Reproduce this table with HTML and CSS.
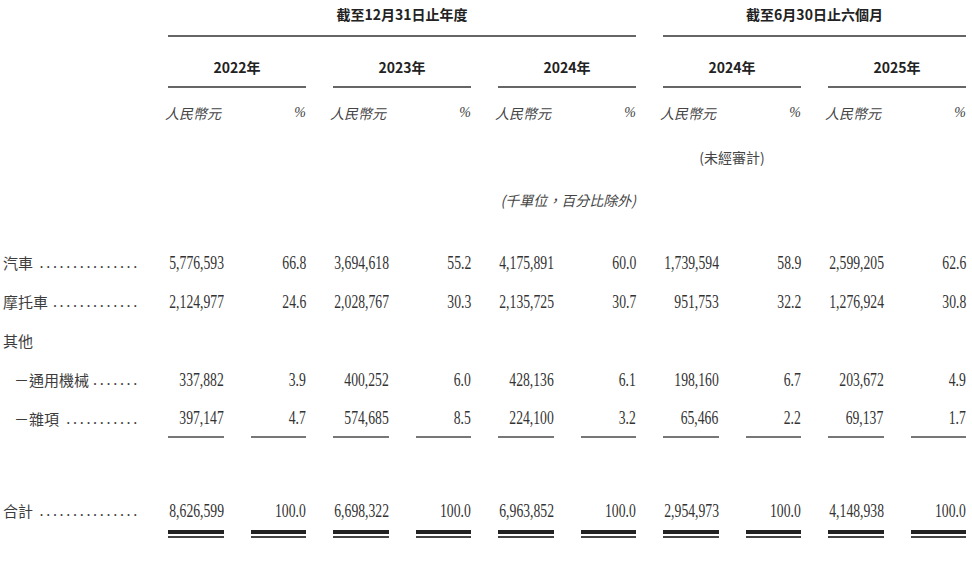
FILE: index.html
```html
<!DOCTYPE html>
<html lang="zh-Hant">
<head>
    <meta charset="UTF-8">
    <meta name="viewport" content="width=device-width, initial-scale=1.0">
    <title>按產品類別劃分的收入</title>
    <link rel="stylesheet" href="styles.css">
</head>
<body>

    <div class="sheet">
        <div class="row head">
            <div></div>
            <div class="period year-span">截至12月31日止年度</div>
            <div class="period half-span">截至6月30日止六個月</div>
        </div>

        <div class="row years">
            <div></div>
            <div class="year">2022年</div>
            <div class="year">2023年</div>
            <div class="year">2024年</div>
            <div class="year">2024年</div>
            <div class="year">2025年</div>
        </div>

        <div class="row units">
            <div></div>
            <div class="unit">人民幣元</div><div class="unit pct">%</div>
            <div class="unit">人民幣元</div><div class="unit pct">%</div>
            <div class="unit">人民幣元</div><div class="unit pct">%</div>
            <div class="unit">人民幣元</div><div class="unit pct">%</div>
            <div class="unit">人民幣元</div><div class="unit pct">%</div>
        </div>

        <div class="row audit">
            <div class="audit-note">(未經審計)</div>
        </div>

        <div class="row basis">
            <div class="basis-note">(千單位，百分比除外)</div>
        </div>

        <div class="row data first">
            <div class="label"><span class="name">汽車</span><span class="dots">...............</span></div>
            <div class="num"><span>5,776,593</span></div><div class="num"><span>66.8</span></div>
            <div class="num"><span>3,694,618</span></div><div class="num"><span>55.2</span></div>
            <div class="num"><span>4,175,891</span></div><div class="num"><span>60.0</span></div>
            <div class="num"><span>1,739,594</span></div><div class="num"><span>58.9</span></div>
            <div class="num"><span>2,599,205</span></div><div class="num"><span>62.6</span></div>
        </div>

        <div class="row data">
            <div class="label"><span class="name">摩托車</span><span class="dots">.............</span></div>
            <div class="num"><span>2,124,977</span></div><div class="num"><span>24.6</span></div>
            <div class="num"><span>2,028,767</span></div><div class="num"><span>30.3</span></div>
            <div class="num"><span>2,135,725</span></div><div class="num"><span>30.7</span></div>
            <div class="num"><span>951,753</span></div><div class="num"><span>32.2</span></div>
            <div class="num"><span>1,276,924</span></div><div class="num"><span>30.8</span></div>
        </div>

        <div class="row data">
            <div class="label"><span class="name">其他</span></div>
        </div>

        <div class="row data">
            <div class="label sub"><span class="name">－通用機械</span><span class="dots">.......</span></div>
            <div class="num"><span>337,882</span></div><div class="num"><span>3.9</span></div>
            <div class="num"><span>400,252</span></div><div class="num"><span>6.0</span></div>
            <div class="num"><span>428,136</span></div><div class="num"><span>6.1</span></div>
            <div class="num"><span>198,160</span></div><div class="num"><span>6.7</span></div>
            <div class="num"><span>203,672</span></div><div class="num"><span>4.9</span></div>
        </div>

        <div class="row data ruled">
            <div class="label sub"><span class="name">－雜項</span><span class="dots">...........</span></div>
            <div class="num"><span>397,147</span></div><div class="num"><span>4.7</span></div>
            <div class="num"><span>574,685</span></div><div class="num"><span>8.5</span></div>
            <div class="num"><span>224,100</span></div><div class="num"><span>3.2</span></div>
            <div class="num"><span>65,466</span></div><div class="num"><span>2.2</span></div>
            <div class="num"><span>69,137</span></div><div class="num"><span>1.7</span></div>
        </div>

        <div class="row data total">
            <div class="label"><span class="name">合計</span><span class="dots">...............</span></div>
            <div class="num"><span>8,626,599</span></div><div class="num"><span>100.0</span></div>
            <div class="num"><span>6,698,322</span></div><div class="num"><span>100.0</span></div>
            <div class="num"><span>6,963,852</span></div><div class="num"><span>100.0</span></div>
            <div class="num"><span>2,954,973</span></div><div class="num"><span>100.0</span></div>
            <div class="num"><span>4,148,938</span></div><div class="num"><span>100.0</span></div>
        </div>
    </div>

</body>
</html>
```

FILE: styles.css
```css
body {
    margin: 0;
    background: #fff;
    color: #333;
    font-family: "Noto Sans CJK TC", sans-serif;
}
.sheet {
    width: 972px;
}
.row {
    display: grid;
    grid-template-columns: 141px repeat(10, 55.5px);
    column-gap: 27px;
}

/* header */
.period {
    height: 35px;
    line-height: 28px;
    border-bottom: 2px solid #666;
    text-align: center;
    font-size: 14px;
    font-weight: bold;
    color: #222;
}
.year-span {
    grid-column: span 6;
}
.half-span {
    grid-column: span 4;
}
.year {
    grid-column: span 2;
    padding: 20px 0 9px;
    line-height: 20px;
    border-bottom: 2px solid #666;
    text-align: center;
    font-size: 14px;
    font-weight: bold;
    color: #222;
}
.units {
    margin-top: 15px;
}
.unit {
    line-height: 20px;
    font-size: 14px;
    font-style: italic;
    color: #444;
    white-space: nowrap;
    margin-left: -3px;
}
.unit.pct {
    text-align: right;
    font-family: "Liberation Serif", serif;
    margin-left: 0;
}
.audit {
    margin-top: 24px;
}
.audit-note {
    grid-column: 8 / span 2;
    line-height: 20px;
    text-align: center;
    font-size: 14px;
    color: #444;
}
.basis {
    margin-top: 23px;
}
.basis-note {
    grid-column: 2 / span 6;
    line-height: 20px;
    text-align: right;
    font-size: 14px;
    font-style: italic;
    color: #444;
}

/* body rows */
.data {
    line-height: 39px;
}
.data.first {
    margin-top: 33px;
}
.label {
    display: flex;
    padding: 0 1px 0 3px;
    font-size: 15px;
    color: #3c3c3c;
    white-space: nowrap;
}
.label.sub {
    padding-left: 14px;
}
.name {
    flex-shrink: 0;
}
.dots {
    margin-left: auto;
    font-family: "Liberation Serif", serif;
    font-size: 16px;
    letter-spacing: 2.7px;
}
.num {
    display: flex;
    justify-content: flex-end;
    white-space: nowrap;
}
.num span {
    flex-shrink: 0;
    font-family: "Liberation Serif", serif;
    font-size: 19px;
    transform: scaleX(.72);
    transform-origin: right center;
}
.ruled .num {
    line-height: 37px;
    border-bottom: 2px solid #777;
}
.total {
    margin-top: 53px;
}
.total .num {
    padding-bottom: 8px;
    background:
        linear-gradient(#222, #222) left bottom 4px / 100% 4px no-repeat,
        linear-gradient(#444, #444) left bottom / 100% 2px no-repeat;
}
```
